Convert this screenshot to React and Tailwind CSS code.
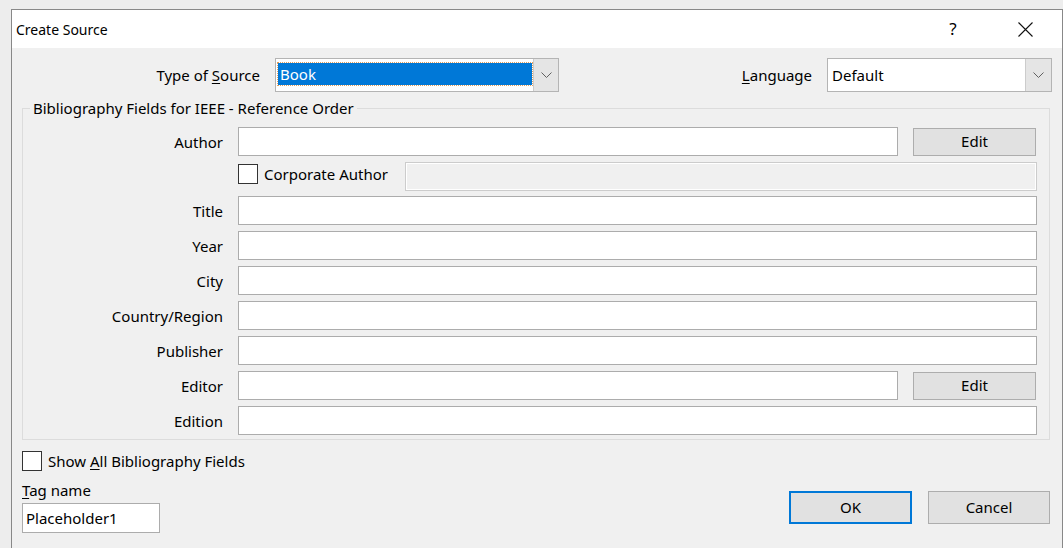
const font = { fontFamily: '"Noto Sans", "Open Sans", sans-serif' };

const Chevron = () => (
  <svg width="11" height="7" viewBox="0 0 11 7" fill="none">
    <path d="M0.5 0.5 L5.5 5.5 L10.5 0.5" stroke="#606060" strokeWidth="1" />
  </svg>
);

const Checkbox = () => (
  <span className="inline-block w-[20px] h-[20px] border border-[#333333] bg-white shrink-0" />
);

const Field = ({ disabled, className = "" }) => (
  <div
    className={`h-[29px] border ${
      disabled ? "border-[#cccccc] bg-[#f0f0f0] shadow-[inset_0_0_0_1px_#ffffff]" : "border-[#acacac] bg-white"
    } ${className}`}
  />
);

const Button = ({ children, className = "" }) => (
  <button
    className={`flex items-center justify-center bg-[#e1e1e1] border border-[#adadad] text-[15px] text-black ${className}`}
  >
    {children}
  </button>
);

const Row = ({ label, children }) => (
  <div className="flex items-center h-[29px]">
    <div className="w-[200px] text-right text-[15px] leading-5">{label}</div>
    <div className="flex-1 flex items-center gap-[15px] ml-[15px]">{children}</div>
  </div>
);

export default function App() {
  return (
    <div className="w-[1063px] h-[548px] overflow-hidden bg-[#ededed] pt-[9px] pl-[11px] text-black" style={font}>
      <div className="w-[1052px] h-[540px] border-l border-t border-r border-[#888888] bg-[#f0f0f0] flex flex-col">
        {/* title bar */}
        <div className="h-[38px] bg-white flex items-center shrink-0">
          <span className="pl-[4px] text-[14px]">Create Source</span>
          <div className="ml-auto flex h-full">
            <div className="w-[70px] flex items-center justify-center text-[17px]">?</div>
            <div className="w-[74px] flex items-center justify-center">
              <svg width="15" height="15" viewBox="0 0 15 15">
                <path d="M0.5 0.5 L14.5 14.5 M14.5 0.5 L0.5 14.5" stroke="#111" strokeWidth="1.1" />
              </svg>
            </div>
          </div>
        </div>

        <div className="pl-[10px] pr-[10px] flex flex-col">
          {/* source type + language */}
          <div className="flex items-center mt-[10px] h-[34px]">
            <div className="w-[238px] text-right text-[15px]">
              Type of <span className="underline underline-offset-2">S</span>ource
            </div>
            <div className="ml-[15px] w-[284px] h-[34px] border border-[#b4b4b4] bg-white flex">
              <div className="flex-1 pl-[2px] pt-[4px] pb-[6px] pr-[1px]">
                <div className="h-full bg-[#0078d7] text-white text-[15px] flex items-center pl-[2px] outline outline-1 outline-dotted outline-[#e0a060]">
                  Book
                </div>
              </div>
              <div className="w-[25px] bg-[#e5e5e5] border-l border-[#cccccc] flex items-center justify-center">
                <Chevron />
              </div>
            </div>
            <div className="ml-auto text-[15px]">
              <span className="underline underline-offset-2">L</span>anguage
            </div>
            <div className="ml-[15px] w-[225px] h-[34px] border border-[#b4b4b4] bg-white flex">
              <div className="flex-1 pl-[4px] text-[15px] flex items-center">Default</div>
              <div className="w-[26px] bg-[#e5e5e5] border-l border-[#cccccc] flex items-center justify-center">
                <Chevron />
              </div>
            </div>
          </div>

          {/* bibliography fields */}
          <fieldset className="mt-[6px] mr-[2px] border border-[#dcdcdc] pr-[12px] pb-[4px]">
            <legend className="ml-[7px] px-[3px] text-[15px] leading-[20px]">
              Bibliography Fields for IEEE - Reference Order
            </legend>
            <div className="flex flex-col pt-[9px]">
              <Row label="Author">
                <Field className="flex-1" />
                <Button className="w-[123px] h-[28px] mr-[1px]">Edit</Button>
              </Row>
              <div className="flex items-center h-[28px] mt-[6px] ml-[215px]">
                <div className="flex items-center w-[167px] -mt-[4px]">
                  <Checkbox />
                  <span className="ml-[6px] text-[15px] leading-5">Corporate Author</span>
                </div>
                <Field disabled className="flex-1 h-[28px]" />
              </div>
              <div className="flex flex-col gap-[6px] mt-[6px]">
                <Row label="Title"><Field className="flex-1" /></Row>
                <Row label="Year"><Field className="flex-1" /></Row>
                <Row label="City"><Field className="flex-1" /></Row>
                <Row label="Country/Region"><Field className="flex-1" /></Row>
                <Row label="Publisher"><Field className="flex-1" /></Row>
                <Row label="Editor">
                  <Field className="flex-1" />
                  <Button className="w-[123px] h-[28px] mr-[1px]">Edit</Button>
                </Row>
                <Row label="Edition"><Field className="flex-1" /></Row>
              </div>
            </div>
          </fieldset>

          {/* footer */}
          <div className="flex items-center h-[20px] mt-[11px]">
            <Checkbox />
            <span className="ml-[6px] text-[15px] leading-5">
              Show <span className="underline underline-offset-2">A</span>ll Bibliography Fields
            </span>
          </div>
          <div className="flex mt-[9px]">
            <div className="flex flex-col">
              <span className="text-[15px] leading-[20px]">
                <span className="underline underline-offset-2">T</span>ag name
              </span>
              <div className="mt-[3px] w-[138px] h-[30px] border border-[#acacac] bg-white text-[15px] flex items-center pl-[3px]">
                Placeholder1
              </div>
            </div>
            <div className="ml-auto mr-[2px] mt-[11px] flex gap-[16px]">
              <button className="w-[123px] h-[33px] bg-[#e1e1e1] border-2 border-[#0078d7] text-[15px]">OK</button>
              <Button className="w-[122px] h-[33px]">Cancel</Button>
            </div>
          </div>
        </div>
      </div>
    </div>
  );
}
